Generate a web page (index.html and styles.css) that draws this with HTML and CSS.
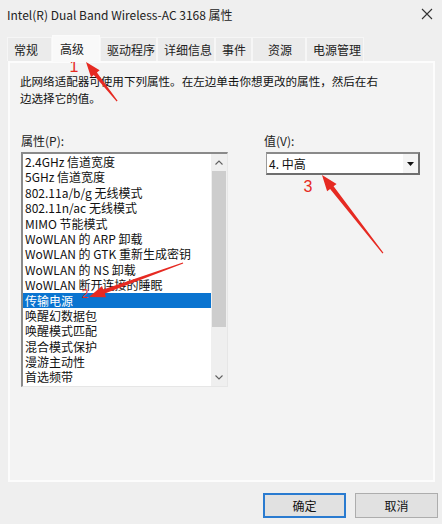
FILE: index.html
```html
<!DOCTYPE html>
<html lang="zh-CN">
<head>
<meta charset="utf-8">
<title>Intel(R) Dual Band Wireless-AC 3168 属性</title>
<link rel="stylesheet" href="styles.css">
</head>
<body>
<div class="window">
  <div class="titlebar">
    <span class="title">Intel(R) Dual Band Wireless-AC 3168 属性</span>
    <svg class="close" width="12" height="12" viewBox="0 0 12 12"><path d="M1 1 L11 11 M11 1 L1 11" stroke="#333" stroke-width="1.1" fill="none"/></svg>
  </div>
  <div class="tabs">
    <div class="tab t1">常规</div>
    <div class="tab t2 active">高级</div>
    <div class="tab t3">驱动程序</div>
    <div class="tab t4">详细信息</div>
    <div class="tab t5">事件</div>
    <div class="tab t6">资源</div>
    <div class="tab t7">电源管理</div>
  </div>
  <div class="panel">
    <p class="desc">此网络适配器可使用下列属性。在左边单击你想更改的属性，然后在右<br>边选择它的值。</p>
    <div class="columns">
      <div class="col-left">
        <div class="label">属性(P):</div>
        <div class="listbox">
          <ul class="items">
            <li>2.4GHz 信道宽度</li>
            <li>5GHz 信道宽度</li>
            <li>802.11a/b/g 无线模式</li>
            <li>802.11n/ac 无线模式</li>
            <li>MIMO 节能模式</li>
            <li>WoWLAN 的 ARP 卸载</li>
            <li>WoWLAN 的 GTK 重新生成密钥</li>
            <li>WoWLAN 的 NS 卸载</li>
            <li>WoWLAN 断开连接的睡眠</li>
            <li class="selected">传输电源</li>
            <li>唤醒幻数据包</li>
            <li>唤醒模式匹配</li>
            <li>混合模式保护</li>
            <li>漫游主动性</li>
            <li>首选频带</li>
          </ul>
          <div class="scrollbar">
            <div class="sb-btn"><svg width="8" height="5" viewBox="0 0 8 5"><path d="M0.5 4.5 L4 1 L7.5 4.5" stroke="#606060" stroke-width="1.1" fill="none"/></svg></div>
            <div class="sb-track"><div class="sb-thumb"></div></div>
            <div class="sb-btn"><svg width="8" height="5" viewBox="0 0 8 5"><path d="M0.5 0.5 L4 4 L7.5 0.5" stroke="#606060" stroke-width="1.1" fill="none"/></svg></div>
          </div>
        </div>
      </div>
      <div class="col-right">
        <div class="label">值(V):</div>
        <div class="combo">
          <span class="combo-text">4. 中高</span>
          <span class="combo-btn"><svg width="7" height="4" viewBox="0 0 7 4"><path d="M0 0 L7 0 L3.5 4 Z" fill="#111"/></svg></span>
        </div>
      </div>
    </div>
  </div>
  <div class="buttons">
    <button class="btn primary">确定</button>
    <button class="btn">取消</button>
  </div>
  <svg class="annot" width="442" height="524" viewBox="0 0 442 524">
    <g fill="#e62a22">
      <polygon transform="translate(86 62) rotate(-128.5)" points="-50,-0.6 -15,-2 -15,-5.5 0,0 -15,5.5 -15,2 -50,0.6"/>
      <polygon transform="translate(89 297) rotate(160.1)" points="-100,-0.6 -16,-2.2 -16,-6 0,0 -16,6 -16,2.2 -100,0.6"/>
      <polygon transform="translate(322 175) rotate(-128)" points="-99,-0.6 -16,-2.2 -16,-6 0,0 -16,6 -16,2.2 -99,0.6"/>
      <text x="74" y="72" class="num">1</text>
      <text x="85" y="298" class="num small">2</text>
      <text x="308" y="192" class="num">3</text>
    </g>
  </svg>
</div>
</body>
</html>
```
FILE: styles.css
```css
* { box-sizing: border-box; }
html, body { margin: 0; padding: 0; }
body {
  background: #efefef;
  font-family: "Noto Sans CJK SC", "Noto Sans", sans-serif;
  font-size: 12px;
  color: #111;
}
.window {
  position: relative;
  width: 442px;
  height: 524px;
  overflow: hidden;
  display: flex;
  flex-direction: column;
}
.titlebar {
  height: 28px;
  display: flex;
  align-items: center;
  justify-content: space-between;
  padding: 0 9px 0 7px;
}
.title { font-size: 12px; color: #222; }
.tabs {
  margin-top: 7px;
  height: 26px;
  display: flex;
  align-items: flex-end;
  padding-left: 7px;
  position: relative;
  z-index: 1;
}
.tab {
  height: 24px;
  line-height: 24px;
  padding-left: 6px;
  background: #ebebeb;
  border: 1px solid #f6f6f6;
  border-bottom: none;
  color: #222;
  white-space: nowrap;
}
.tab.active {
  height: 27px;
  line-height: 26px;
  margin-bottom: -1px;
  background: #f9f9f9;
  border-color: #fbfbfb;
  padding-left: 7px;
}
.t1 { width: 45px; }
.t2 { width: 48px; }
.t3 { width: 57px; }
.t4 { width: 58px; }
.t5 { width: 37px; }
.t6 { width: 54px; padding-left: 15px; }
.t7 { width: 58px; }
.panel {
  margin: 0 7px 0 8px;
  height: 421px;
  background: #f3f3f3;
  border: 2px solid #fcfcfc;
  padding: 10px 0 0 11px;
}
.desc {
  margin: 0 0 0 -1px;
  font-size: 11.55px;
  line-height: 17px;
  color: #111;
}
.columns {
  display: flex;
  gap: 37px;
  margin-top: 26px;
}
.label {
  line-height: 16px;
  margin-bottom: 3px;
  color: #222;
}
.col-left { width: 207px; }
.col-right { width: 155px; padding-left: 0; }
.col-right .label { margin-left: -1px; }
.listbox {
  height: 235px;
  display: flex;
  background: #fff;
  border-top: 2px solid #8a8a8a;
  border-left: 2px solid #8a8a8a;
  border-right: 1px solid #e6e6e6;
  border-bottom: 1px solid #e6e6e6;
}
.items {
  list-style: none;
  margin: 0;
  padding: 0;
  flex: 1;
}
.items li {
  line-height: 15.4px;
  height: 15.4px;
  padding-left: 2px;
  white-space: nowrap;
  color: #111;
}
.items li.selected {
  background: #0a74d0;
  color: #fff;
}
.scrollbar {
  width: 16px;
  display: flex;
  flex-direction: column;
  background: #efefef;
}
.sb-btn {
  height: 17px;
  display: flex;
  align-items: center;
  justify-content: center;
}
.sb-track { flex: 1; }
.sb-thumb {
  height: 156px;
  margin: 0 1px;
  background: #cdcdcd;
}
.combo {
  margin-left: 1px;
  width: 154px;
  height: 23px;
  display: flex;
  align-items: center;
  background: #fff;
  border: 1px solid #9a9a9a;
  border-right: 2px solid #6e6e6e;
  border-bottom: 2px solid #6e6e6e;
  border-top: 2px solid #8a8a8a;
}
.combo-text { flex: 1; padding-left: 2px; line-height: 18px; }
.combo-btn {
  width: 15px;
  height: 100%;
  display: flex;
  align-items: center;
  justify-content: center;
  background: #f4f4f4;
}
.buttons {
  display: flex;
  justify-content: flex-end;
  gap: 9px;
  padding: 11px 4px 0 0;
}
.btn {
  width: 83px;
  height: 25px;
  font: inherit;
  font-size: 12px;
  color: #111;
  background: #e1e1e1;
  border: 1px solid #adadad;
  padding: 0;
}
.btn.primary {
  border: 2px solid #2a7bd0;
}
.annot {
  position: absolute;
  left: 0;
  top: 0;
  pointer-events: none;
}
.num {
  font-family: "Liberation Sans", "DejaVu Sans", sans-serif;
  font-size: 16px;
  text-anchor: middle;
}
.num.small { font-size: 12px; }
```
